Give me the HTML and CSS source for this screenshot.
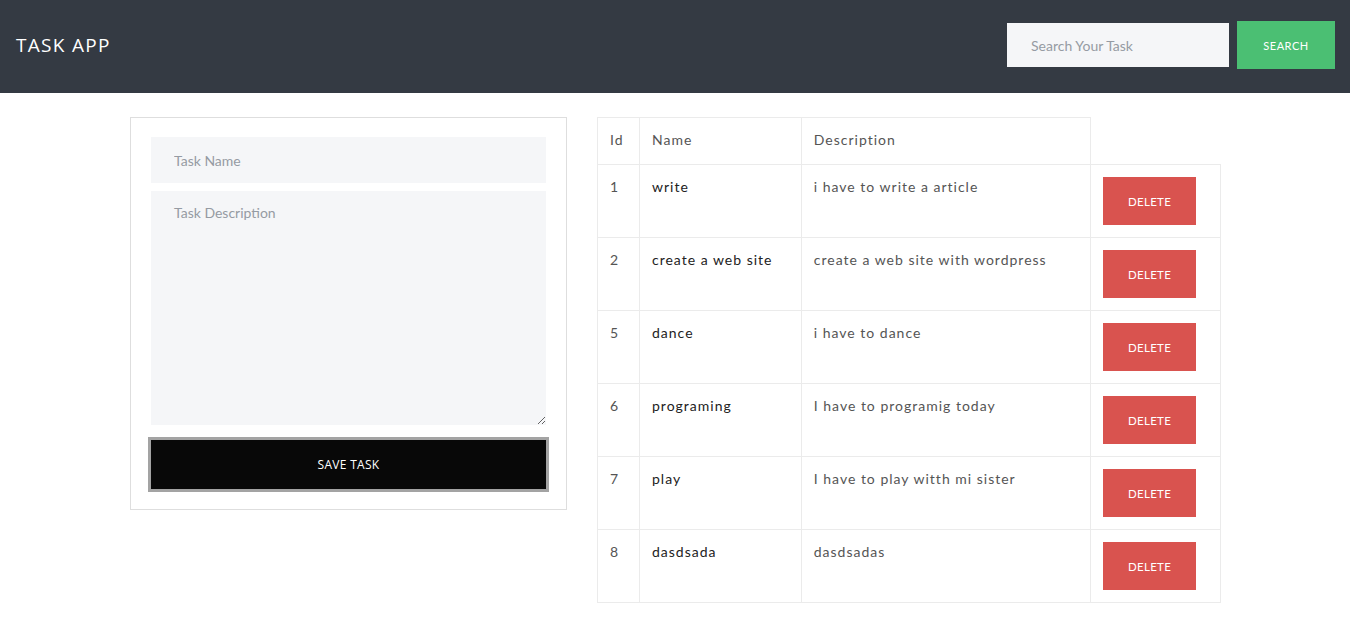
FILE: index.html
```html
<!DOCTYPE html>
<html>
<head>
<meta charset="utf-8">
<link rel="stylesheet" href="styles.css">
</head>
<body>
<header class="topbar">
  <div class="brand">TASK APP</div>
  <form class="search">
    <input class="search-input" type="text" placeholder="Search Your Task">
    <button class="search-btn" type="button">SEARCH</button>
  </form>
</header>
<main class="content">
  <section class="card">
    <input class="field" type="text" placeholder="Task Name">
    <textarea class="field area" placeholder="Task Description"></textarea>
    <button class="save-btn" type="button">SAVE TASK</button>
  </section>
  <table class="tasks">
    <thead>
      <tr><th class="c-id">Id</th><th class="c-name">Name</th><th class="c-desc">Description</th><th class="c-act empty"></th></tr>
    </thead>
    <tbody>
      <tr><td>1</td><td class="name">write</td><td>i have to write a article</td><td class="act"><button class="del">DELETE</button></td></tr>
      <tr><td>2</td><td class="name">create a web site</td><td>create a web site with wordpress</td><td class="act"><button class="del">DELETE</button></td></tr>
      <tr><td>5</td><td class="name">dance</td><td>i have to dance</td><td class="act"><button class="del">DELETE</button></td></tr>
      <tr><td>6</td><td class="name">programing</td><td>I have to programig today</td><td class="act"><button class="del">DELETE</button></td></tr>
      <tr><td>7</td><td class="name">play</td><td>I have to play witth mi sister</td><td class="act"><button class="del">DELETE</button></td></tr>
      <tr><td>8</td><td class="name">dasdsada</td><td>dasdsadas</td><td class="act"><button class="del">DELETE</button></td></tr>
    </tbody>
  </table>
</main>
</body>
</html>
```
FILE: styles.css
```css
* { box-sizing: border-box; }
body {
  margin: 0;
  font-family: "Lato", "Open Sans", sans-serif;
  background: #fff;
  color: #555;
}
.topbar {
  height: 93px;
  background: #343a43;
  display: flex;
  align-items: center;
  justify-content: space-between;
  padding: 0 15px 0 16px;
}
.brand {
  color: #fff;
  font-family: "Open Sans", sans-serif;
  font-size: 19px;
  letter-spacing: 1.3px;
  margin-top: -4px;
}
.search {
  display: flex;
  align-items: center;
  gap: 8px;
  margin-bottom: 3px;
}
.search-input {
  width: 222px;
  height: 44px;
  border: 0;
  background: #f5f6f8;
  padding: 0 24px;
  font-family: "Lato", sans-serif;
  font-size: 14px;
  color: #333;
  outline: none;
}
.search-input::placeholder { color: #959ba3; }
.search-btn {
  width: 98px;
  height: 48px;
  border: 0;
  background: #4bbf73;
  color: #fff;
  font-family: "Lato", sans-serif;
  font-size: 11px;
  letter-spacing: 0.5px;
}
.content {
  display: flex;
  justify-content: center;
  align-items: flex-start;
  gap: 30px;
  padding-top: 24px;
  padding-left: 1px;
}
.card {
  width: 437px;
  border: 1px solid #dedede;
  padding: 19px 20px 17px;
  display: flex;
  flex-direction: column;
}
.field {
  width: 100%;
  border: 0;
  background: #f5f6f8;
  font-family: "Lato", sans-serif;
  font-size: 14px;
  padding: 0 23px;
  outline: none;
  display: block;
}
.field::placeholder { color: #959ba3; }
.field:first-child { height: 46px; }
.area {
  height: 234px;
  margin-top: 8px;
  padding-top: 13px;
  resize: vertical;
}
.save-btn {
  margin: 12px -3px 0;
  height: 55px;
  background: #080808;
  border: 3px solid #a3a3a3;
  color: #fff;
  font-family: "Open Sans", sans-serif;
  font-size: 12px;
  letter-spacing: 0.3px;
}
.tasks {
  width: 624px;
  border-collapse: collapse;
  font-family: "Lato", sans-serif;
  font-size: 14px;
  letter-spacing: 1px;
}
.tasks th, .tasks td {
  border: 1px solid #ebebeb;
  text-align: left;
  vertical-align: top;
  padding: 11px 12px 13px;
  line-height: 22px;
}
.tasks th {
  font-weight: normal;
  color: #555;
  height: 46px;
}
.tasks th.empty { border: 0; border-bottom: 1px solid #ebebeb; }
.tasks td { height: 73px; color: #555; }
.tasks td.name { color: #222; }
.c-id { width: 42px; }
.c-name { width: 162px; }
.c-desc { width: 290px; }
.c-act { width: 130px; }
.tasks td.act { padding: 12px 12px 12px; }
.del {
  width: 93px;
  height: 48px;
  border: 0;
  background: #d9534f;
  color: #fff;
  font-family: "Lato", sans-serif;
  font-size: 11.5px;
  letter-spacing: 0.3px;
  display: block;
}
```
